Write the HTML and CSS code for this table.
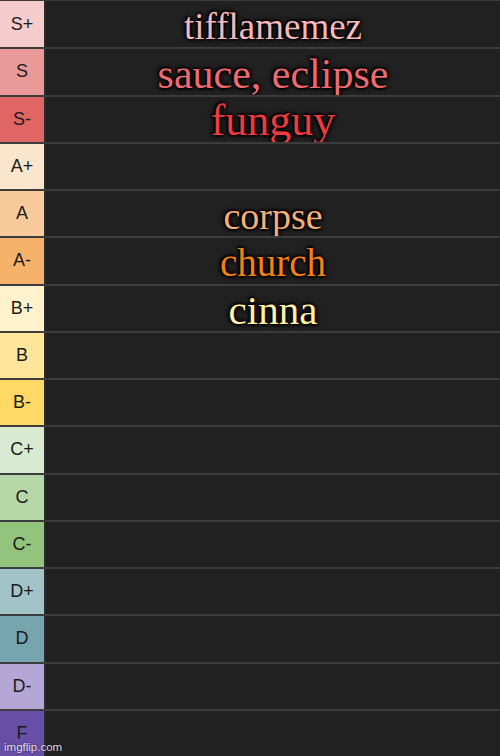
FILE: index.html
```html
<!DOCTYPE html>
<html>
<head>
<meta charset="utf-8">
<link rel="stylesheet" href="styles.css">
</head>
<body>
<div class="list">
  <div class="row"><div class="label t-splus">S+</div><div class="items"><span class="name n-tiff">tifflamemez</span></div></div>
  <div class="row"><div class="label t-s">S</div><div class="items"><span class="name n-sauce">sauce, eclipse</span></div></div>
  <div class="row"><div class="label t-sminus">S-</div><div class="items"><span class="name n-fun">funguy</span></div></div>
  <div class="row"><div class="label t-aplus">A+</div><div class="items"></div></div>
  <div class="row"><div class="label t-a">A</div><div class="items"><span class="name n-corpse">corpse</span></div></div>
  <div class="row"><div class="label t-aminus">A-</div><div class="items"><span class="name n-church">church</span></div></div>
  <div class="row"><div class="label t-bplus">B+</div><div class="items"><span class="name n-cinna">cinna</span></div></div>
  <div class="row"><div class="label t-b">B</div><div class="items"></div></div>
  <div class="row"><div class="label t-bminus">B-</div><div class="items"></div></div>
  <div class="row"><div class="label t-cplus">C+</div><div class="items"></div></div>
  <div class="row"><div class="label t-c">C</div><div class="items"></div></div>
  <div class="row"><div class="label t-cminus">C-</div><div class="items"></div></div>
  <div class="row"><div class="label t-dplus">D+</div><div class="items"></div></div>
  <div class="row"><div class="label t-d">D</div><div class="items"></div></div>
  <div class="row"><div class="label t-dminus">D-</div><div class="items"></div></div>
  <div class="row"><div class="label t-f">F</div><div class="items"></div></div>
  <div class="watermark">imgflip.com</div>
</div>
</body>
</html>
```
FILE: styles.css
```css
* { box-sizing: border-box; }
html, body { margin: 0; padding: 0; background: #212121; }
.list {
  position: relative;
  width: 500px;
  height: 756px;
  display: grid;
  grid-template-rows: repeat(16, 1fr);
  background: #212121;
  overflow: hidden;
}
.row {
  display: flex;
  border-top: 2px solid #3c3c3c;
  min-height: 0;
}
.row:first-child { border-top-width: 1px; }
.label {
  width: 46px;
  flex: none;
  display: flex;
  align-items: center;
  justify-content: center;
  font-family: "Liberation Sans", Arial, sans-serif;
  font-size: 18px;
  color: #1a1a1a;
  border-right: 2px solid #2a2a2a;
}
.items {
  flex: 1;
  display: flex;
  align-items: center;
  justify-content: center;
  background: #212121;
}
.name {
  font-family: "Liberation Serif", "Times New Roman", serif;
  line-height: 1;
  padding-top: 4px;
  text-shadow: 0 0 3px #000, 1px 1px 3px #000, -1px -1px 3px #000, 0 0 6px #000;
  white-space: nowrap;
}
.n-tiff { font-size: 37px; color: #f4b9bc; }
.n-sauce { font-size: 42px; color: #ef6a6f; }
.n-fun { font-size: 44px; color: #ef3b3d; }
.n-corpse { font-size: 38px; color: #f6b07a; }
.n-church { font-size: 39px; color: #f5820e; }
.n-cinna { font-size: 41px; color: #fff1a3; }

.t-splus { background: #f4cccc; }
.t-s { background: #ea9999; }
.t-sminus { background: #e06666; }
.t-aplus { background: #fce5cd; }
.t-a { background: #f9cb9c; }
.t-aminus { background: #f6b26b; }
.t-bplus { background: #fff2cc; }
.t-b { background: #ffe599; }
.t-bminus { background: #ffd966; }
.t-cplus { background: #d9ead3; }
.t-c { background: #b6d7a8; }
.t-cminus { background: #93c47d; }
.t-dplus { background: #a2c4c9; }
.t-d { background: #76a5af; }
.t-dminus { background: #b4a7d6; }
.t-f { background: #674ea7; }

.watermark {
  position: absolute;
  left: 4px;
  bottom: 3px;
  font-family: "Liberation Sans", Arial, sans-serif;
  font-size: 11.5px;
  color: rgba(255,255,255,0.85);
  text-shadow: 0 0 2px rgba(0,0,0,0.6);
}
```
